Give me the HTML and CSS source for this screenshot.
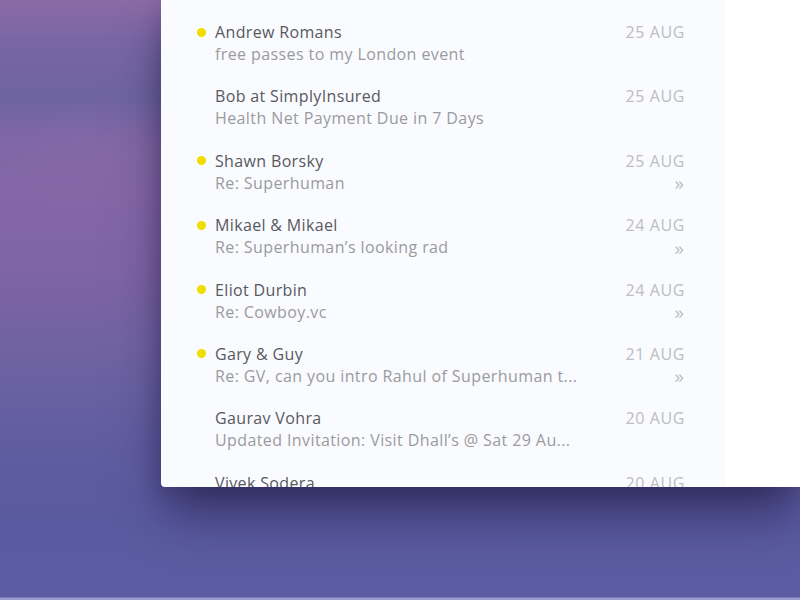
FILE: index.html
```html
<!DOCTYPE html>
<html>
<head>
<meta charset="utf-8">
<link rel="stylesheet" href="styles.css">
</head>
<body>
<div class="desktop">
  <div class="window">
    <div class="list">
      <div class="row"><span class="dot"></span><span class="name">Andrew Romans</span><span class="date">25 AUG</span><span class="subject">free passes to my London event</span><span class="more"></span></div>
      <div class="row"><span class="nodot"></span><span class="name">Bob at SimplyInsured</span><span class="date">25 AUG</span><span class="subject">Health Net Payment Due in 7 Days</span><span class="more"></span></div>
      <div class="row"><span class="dot"></span><span class="name">Shawn Borsky</span><span class="date">25 AUG</span><span class="subject">Re: Superhuman</span><span class="more">»</span></div>
      <div class="row"><span class="dot"></span><span class="name">Mikael &amp; Mikael</span><span class="date">24 AUG</span><span class="subject">Re: Superhuman’s looking rad</span><span class="more">»</span></div>
      <div class="row"><span class="dot"></span><span class="name">Eliot Durbin</span><span class="date">24 AUG</span><span class="subject">Re: Cowboy.vc</span><span class="more">»</span></div>
      <div class="row"><span class="dot"></span><span class="name">Gary &amp; Guy</span><span class="date">21 AUG</span><span class="subject">Re: GV, can you intro Rahul of Superhuman t...</span><span class="more">»</span></div>
      <div class="row"><span class="nodot"></span><span class="name">Gaurav Vohra</span><span class="date">20 AUG</span><span class="subject">Updated Invitation: Visit Dhall’s @ Sat 29 Au...</span><span class="more"></span></div>
      <div class="row"><span class="nodot"></span><span class="name">Vivek Sodera</span><span class="date">20 AUG</span><span class="subject"></span><span class="more"></span></div>
    </div>
    <div class="side"></div>
  </div>
</div>
</body>
</html>
```
FILE: styles.css
```css
html, body {
  margin: 0;
  padding: 0;
}
body {
  width: 800px;
  height: 600px;
  overflow: hidden;
  background:
    radial-gradient(ellipse 260px 60px at 120px 150px, rgba(150,110,170,0.35), rgba(150,110,170,0) 100%),
    linear-gradient(180deg, #8c6aa6 0px, #7a66a4 40px, #6d64a0 100px, #7a65a4 140px, #8466a6 200px, #7d64a4 280px, #6e62a2 360px, #605da0 440px, #5a5aa0 520px, #5c5ca2 597px, #9a9ad0 598px, #9a9ad0 600px);
  font-family: "Open Sans", "Liberation Sans", sans-serif;
}
.desktop {
  height: 600px;
}
.window {
  margin-left: 161px;
  width: 639px;
  height: 487px;
  display: flex;
  overflow: hidden;
  border-bottom-left-radius: 4px;
  box-shadow: 0 30px 45px -5px rgba(25, 20, 60, 0.6), -4px 8px 16px rgba(25,20,60,0.15);
}
.list {
  width: 564px;
  background: #fafbfe;
  overflow: hidden;
}
.side {
  flex: 1;
  background: #ffffff;
}
.row {
  box-sizing: border-box;
  height: 64.4px;
  padding: 21px 41px 0 36px;
  display: grid;
  grid-template-columns: 18px 1fr auto;
  grid-template-rows: 22px 22px;
  align-items: center;
}
.dot {
  width: 9px;
  height: 9px;
  border-radius: 50%;
  background: #f0dd00;
}
.name {
  font-size: 16px;
  font-weight: 500;
  color: #58585f;
  letter-spacing: 0.35px;
  white-space: nowrap;
}
.date {
  font-size: 16px;
  font-weight: 500;
  color: #bdbdc2;
  letter-spacing: 0.6px;
  margin-right: -1px;
  text-align: right;
}
.subject {
  grid-column: 2;
  font-size: 16px;
  font-weight: 500;
  color: #9a9aa0;
  letter-spacing: 0.4px;
  white-space: nowrap;
}
.more {
  grid-column: 3;
  justify-self: end;
  font-size: 19px;
  color: #bdbdc2;
  line-height: 22px;
  padding-top: 1px;
}
```
